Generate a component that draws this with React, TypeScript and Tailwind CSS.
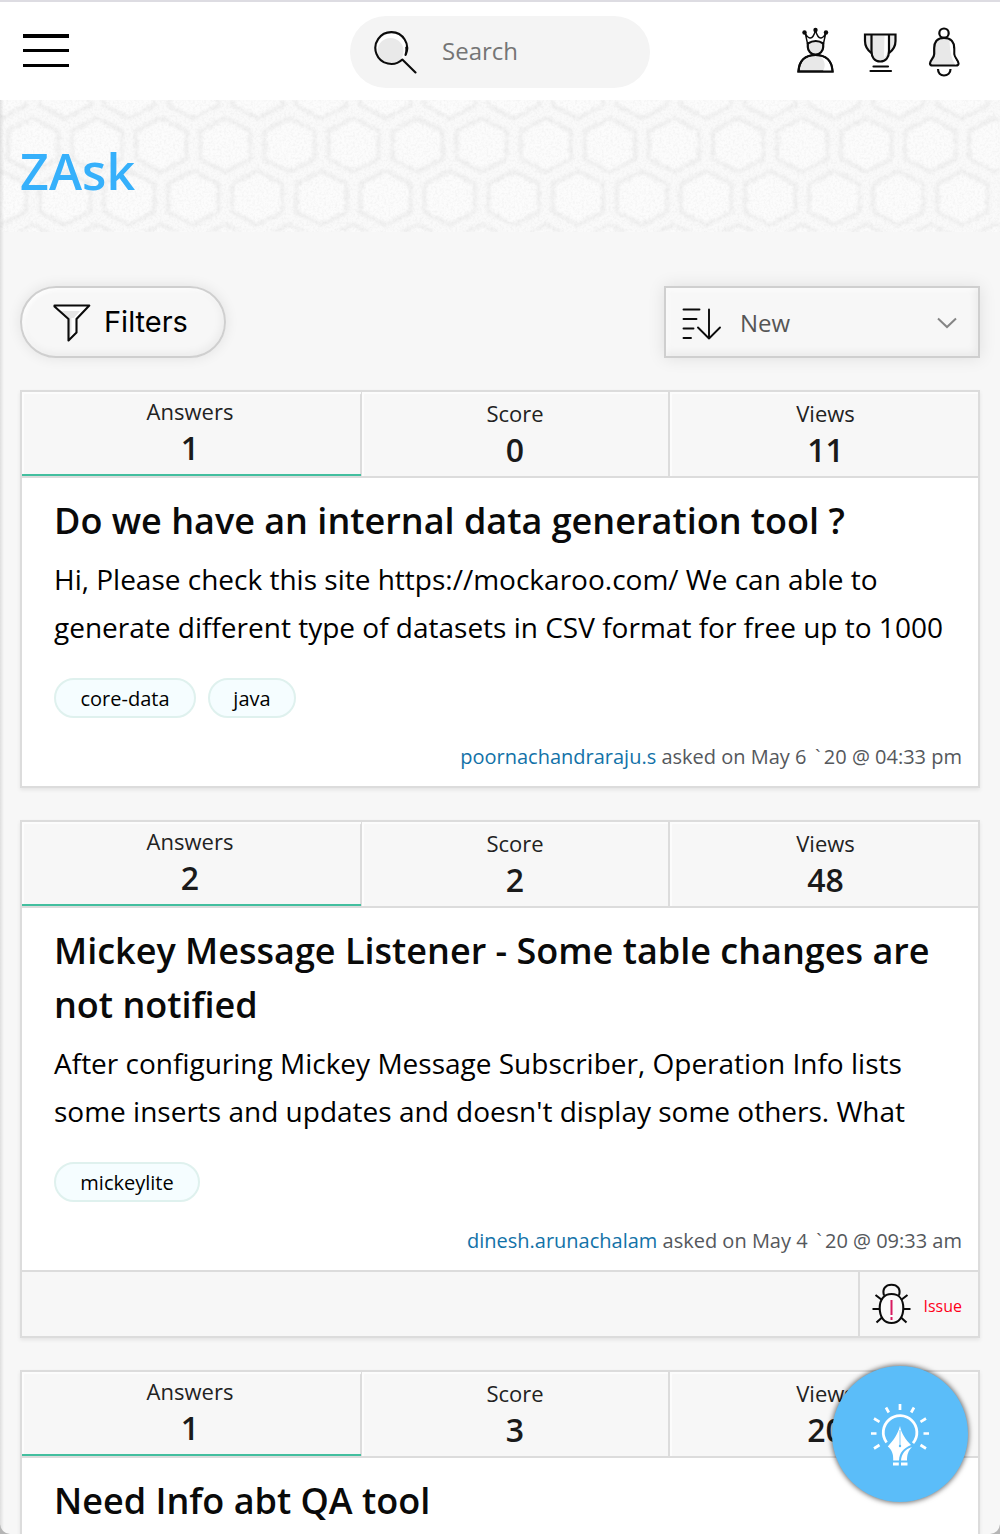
import React from "react";

type Question = {
  answers: number;
  score: number;
  views: number;
  title: string;
  body: string[];
  tags: { label: string; width: string }[];
  author: string;
  day: string;
  time: string;
  issue?: boolean;
};

const questions: Question[] = [
  {
    answers: 1,
    score: 0,
    views: 11,
    title: "Do we have an internal data generation tool ?",
    body: [
      "Hi, Please check this site https://mockaroo.com/ We can able to",
      "generate different type of datasets in CSV format for free up to 1000",
    ],
    tags: [
      { label: "core-data", width: "w-[142px]" },
      { label: "java", width: "w-[88px]" },
    ],
    author: "poornachandraraju.s",
    day: "May 6",
    time: "20 @ 04:33 pm",
  },
  {
    answers: 2,
    score: 2,
    views: 48,
    title: "Mickey Message Listener - Some table changes are not notified",
    body: [
      "After configuring Mickey Message Subscriber, Operation Info lists",
      "some inserts and updates and doesn't display some others. What",
    ],
    tags: [{ label: "mickeylite", width: "w-[146px]" }],
    author: "dinesh.arunachalam",
    day: "May 4",
    time: "20 @ 09:33 am",
    issue: true,
  },
  {
    answers: 1,
    score: 3,
    views: 20,
    title: "Need Info abt QA tool",
    body: ["", ""],
    tags: [],
    author: "",
    day: "",
    time: "",
  },
];

function HexBanner() {
  const hex = (cx: number, cy: number) =>
    `M${cx} ${cy - 27}L${cx + 25} ${cy - 14}V${cy + 14}L${cx} ${cy + 27}L${cx - 25} ${cy + 14}V${cy - 14}Z`;
  const d = [
    hex(33, 45), hex(-31, 45), hex(97, 45),
    hex(1, 98), hex(65, 98), hex(1, -8.5), hex(65, -8.5),
  ].join("");
  return (
    <svg className="absolute inset-0 h-full w-full" aria-hidden="true">
      <defs>
        <pattern id="hex" width="64.1" height="106.5" patternUnits="userSpaceOnUse">
          <path d={d} fill="#fcfcfc" stroke="#f0f0f0" strokeWidth="4" strokeLinejoin="round" />
        </pattern>
        <filter id="grain" x="0" y="0" width="100%" height="100%">
          <feTurbulence type="fractalNoise" baseFrequency="0.45" numOctaves="2" seed="4" />
          <feColorMatrix values="0 0 0 0 0.5  0 0 0 0 0.5  0 0 0 0 0.5  0.3 0 0 0 -0.12" />
        </filter>
        <filter id="soft" x="0" y="0" width="100%" height="100%">
          <feTurbulence type="fractalNoise" baseFrequency="0.3" numOctaves="2" seed="9" result="n" />
          <feDisplacementMap in="SourceGraphic" in2="n" scale="7" xChannelSelector="R" yChannelSelector="G" />
          <feGaussianBlur stdDeviation="1" />
        </filter>
      </defs>
      <rect width="100%" height="100%" fill="#fafafa" />
      <rect width="100%" height="100%" fill="url(#hex)" filter="url(#soft)" />
      <rect width="100%" height="100%" filter="url(#grain)" />
    </svg>
  );
}

function SearchIcon() {
  return (
    <svg className="h-[44px] w-[44px]" viewBox="0 0 44 44" fill="none">
      <circle cx="18" cy="18.500" r="15" fill="#fff" />
      <circle cx="16.500" cy="21" r="13" fill="#e9e9e9" />
      <path d="M31.800 24.500A15.900 15.900 0 1 0 28.300 29.500L41.500 42.500M32.300 17.500Q32.800 21 31.500 25" stroke="#0b0b0b" strokeWidth="2.100" strokeLinecap="round" strokeLinejoin="round" />
    </svg>
  );
}

function CrownUserIcon() {
  return (
    <svg className="h-[48px] w-[40px]" viewBox="0 0 40 48" fill="none" stroke="#0b0b0b" strokeWidth="2.200">
      <path d="M2.500 45.500C3 35 9 29 19.500 29S36 35 36.500 45.500Z" fill="#e8e8e8" />
      <path d="M24 30C31 32 35 37 36 45H27C30 40 29 34 24 30Z" fill="#fff" stroke="none" />
      <path d="M2.500 45.500C3 35 9 29 19.500 29S36 35 36.500 45.500Z" />
      <path d="M11.800 17.500Q20 12.500 27.200 17.500V21C27.200 25 24 28.500 19.500 28.500S11.800 25 11.800 21Z" fill="#e8e8e8" />
      <path d="M11.600 18L9 6C11 12 16.500 16.500 19.500 4C22.500 16.500 28 12 30 6L27.400 18" strokeWidth="1.400" />
      <g fill="#0b0b0b" stroke="none"><circle cx="8.500" cy="6.500" r="2.200" /><circle cx="19.500" cy="4" r="2.200" /><circle cx="30" cy="6.500" r="2.200" /></g>
    </svg>
  );
}

function TrophyIcon() {
  return (
    <svg className="h-[42px] w-[36px]" viewBox="0 0 36 42" fill="none" stroke="#0b0b0b" strokeWidth="2.200">
      <path d="M9.500 3.500H27V20C27 26 24 31 18.200 31S9.500 26 9.500 20Z" fill="#e8e8e8" stroke="none" />
      <path d="M3 3.500H9.500V22Q3 17 3 10ZM27 3.500H33.500V10Q33 18 27 22Z" fill="#e8e8e8" stroke="none" />
      <path d="M22.500 4.500H26V21L22 27Z" fill="#fff" stroke="none" />
      <path d="M9.500 22C4.500 18.500 3 14 3 10V3.500H33.500V10C33.500 14 32 18.500 27 22" />
      <path d="M9.500 3.500V20C9.500 26 12.500 30.500 18.200 30.500S27 26 27 20V3.500" />
      <path d="M11.500 35.500H26M8.500 40H29" strokeLinecap="round" />
    </svg>
  );
}

function BellIcon() {
  return (
    <svg className="h-[50px] w-[34px]" viewBox="0 0 34 50" fill="none" stroke="#0b0b0b" strokeWidth="2.200">
      <circle cx="17" cy="6.200" r="4.700" fill="#fff" />
      <path d="M17 10.800C9.500 10.800 7.200 16 7.200 21V27C7.200 31 3 33 3 36.500C3 38.500 4 38.500 5.500 38.500H29C31 38.500 31.500 38 31.500 36.500C31.500 33 27.200 31 27.200 27V21C27.200 16 24.500 10.800 17 10.800Z" fill="#e8e8e8" />
      <path d="M22.500 14Q26 16 26.200 22V28L30.500 36.500L28 37.500Q23 30 22.500 14Z" fill="#fff" stroke="none" />
      <path d="M11 42C11 46 13.500 48.500 17 48.500S23.500 46 23.500 42" />
    </svg>
  );
}

function FunnelIcon() {
  return (
    <svg className="mt-[2px] h-[40px] w-[38px]" viewBox="0 0 38 40" fill="none">
      <path d="M1.500 3H36.500L23.500 16V29L15.500 37V16Z" fill="#fff" />
      <path d="M8 8H27L20 16V27L16 36V16Z" fill="#e6e6e6" />
      <path d="M18.500 15H23V28.500L18.500 33Z" fill="#fff" />
      <path d="M1.500 2.500H36.300L23.500 16V29.500L15.500 37.500V16L1.500 3.500Z" stroke="#0b0b0b" strokeWidth="2.100" strokeLinejoin="round" />
    </svg>
  );
}

function SortIcon() {
  return (
    <svg className="mt-[3px] h-[34px] w-[40px]" viewBox="0 0 40 34" fill="none" stroke="#0b0b0b" strokeWidth="1.900" strokeLinecap="round" strokeLinejoin="round">
      <path d="M1.500 2.500H17.500M1.500 12H14.500M1.500 21.500H11.500M1.500 31H9" />
      <path d="M27 2.500V31.500M16 20.500L27 31.500L38 20.500" />
    </svg>
  );
}

function BugIcon() {
  return (
    <svg className="h-[42px] w-[40px]" viewBox="0 0 40 42" fill="none" stroke="#0b0b0b" strokeWidth="2.100">
      <path d="M12 12.500C10 6 13.500 1.800 19.500 1.800S29 6 27 12.500" />
      <path d="M19.500 11C12 11 7.700 16.500 7.700 25C7.700 34 12 40 19.500 40S31.300 34 31.300 25C31.300 16.500 27 11 19.500 11Z" fill="#fafafa" />
      <path d="M3.500 12L10 17M35.500 12L29 17M.500 26H8M31 26H38.500M4.500 39.500L10 34.500M34.500 39.500L29 34.500" />
      <path d="M19.500 17V32M19.500 34V37" stroke="#d81b60" strokeWidth="2" />
    </svg>
  );
}

function IdeaIcon() {
  return (
    <svg className="mt-[2px] h-[64px] w-[60px]" viewBox="0 0 60 64" fill="none">
      <path d="M16.600 39.500A16.800 16.800 0 1 1 43 40.200" stroke="#fff" strokeWidth="2.800" />
      <path d="M30 1V7M16 4.500L18.800 9.500M44 4.500L41.200 9.500M4 15.500L9.500 18.800M56 15.500L50.500 18.800M1 30.500H6.500M53.500 30.500H59M4 45.500L9.500 42M56 45.500L50.500 42" stroke="#fff" strokeWidth="2.700" />
      <path d="M30 23C31 30 36 37 41 42C33.500 45.500 29.500 49 29 57.500H23.200C23.500 51 22 47 17.800 43.500C23 38 28 31 30 23Z" fill="#fff" />
      <path d="M42 44C38 48 37 52 37 57.500H31C31.500 51 35 46 42 44ZM23 59.500H28.800V62.500H23ZM31 59.500H37.500V62.500H31Z" fill="#fff" />
      <path d="M30 27V42" stroke="#5abdf8" strokeWidth=".8" />
      <circle cx="30" cy="43" r="1.200" fill="#5abdf8" />
    </svg>
  );
}

function Stat({ label, value, kind = "plain" }: { label: string; value: number; kind?: "active" | "plain" | "last" }) {
  return (
    <div
      className={
        kind === "active"
          ? "relative z-10 -mr-px h-[84px] border-b-2 border-[#43bf9f] pt-px pr-[3px] text-center shadow-[inset_2px_2px_1px_#fcfcfc]"
          : kind === "last"
            ? "h-[84px] border-l-2 border-[#dcdcdc] pt-[3px] pl-[3px] text-center shadow-[inset_2px_2px_1px_#fcfcfc]"
            : "h-[84px] border-l-2 border-[#dcdcdc] pt-[3px] text-center shadow-[inset_2px_2px_1px_#fcfcfc]"
      }
    >
      <div className="h-[36px] text-[22px] leading-[36px] text-[#222]">{label}</div>
      <div className="h-[36px] text-[32px] font-semibold leading-[38px] text-[#1a1a1a]">{value}</div>
    </div>
  );
}

function QuestionCard({ q }: { q: Question }) {
  return (
    <article className="border-2 border-[#dcdcdc] bg-white shadow-[0_2px_4px_rgba(0,0,0,0.08)]">
      <div className="grid grid-cols-[338px_308px_1fr] border-b-2 border-[#dcdcdc] bg-[#f7f7f7]">
        <Stat label="Answers" value={q.answers} kind="active" />
        <Stat label="Score" value={q.score} />
        <Stat label="Views" value={q.views} kind="last" />
      </div>
      <div className="px-8 pt-4">
        <h2 className="text-[36px] font-semibold leading-[54px] text-[#0a0a0a]">{q.title}</h2>
        <div className="mt-[7px] text-[28px] leading-[48px] text-black">
          {q.body.map((line, i) => (
            <p key={i} className="h-12 whitespace-nowrap">{line}</p>
          ))}
        </div>
        <div className="mt-[27px] flex h-10 gap-3">
          {q.tags.map((t) => (
            <span key={t.label} className={`${t.width} flex h-10 items-center justify-center rounded-full border-2 border-[#dff1ee] bg-[#f5fdff] pt-[2px] text-[20px] text-black`}>
              {t.label}
            </span>
          ))}
        </div>
      </div>
      <p className="mt-[22px] h-[46px] pr-4 text-right text-[20px] leading-[34px] text-[#55585c]">
        {q.author && (
          <>
            <a className="text-[#1272a8]">{q.author}</a> asked on {q.day} <span className="mx-[3.3px]">`</span>{q.time}
          </>
        )}
      </p>
      {q.issue && (
        <div className="flex h-[66px] justify-end border-t-2 border-[#dcdcdc] bg-[#f7f7f7]">
          <div className="flex w-[120px] items-center border-l-2 border-[#dcdcdc] pl-3">
            <span className="flex"><BugIcon /></span>
            <span className="ml-[11.5px] mt-[4px] text-[16px] text-[#ff0019]">Issue</span>
          </div>
        </div>
      )}
    </article>
  );
}

export default function App() {
  return (
    <div className="relative h-[1534px] overflow-hidden bg-[#f7f7f7] font-['Open_Sans','Noto_Sans',sans-serif]">
      <header className="flex h-[100px] items-center border-t-2 border-[#dddce2] bg-white">
        <div className="w-[350px] pb-px pl-[23px]">
          <div className="flex h-[33px] w-[46px] flex-col justify-between">
            <span className="h-[3.5px] bg-black" />
            <span className="h-[3.5px] bg-black" />
            <span className="h-[3.5px] bg-black" />
          </div>
        </div>
        <div className="mt-[2px] flex h-[72px] w-[300px] items-center rounded-full bg-[#f4f4f4] pl-[24px]">
          <SearchIcon />
          <span className="-mt-[2px] ml-[24px] text-[24px] text-[#757575]">Search</span>
        </div>
        <div className="ml-[146px] flex items-center">
          <span className="-mt-[2px] flex"><CrownUserIcon /></span>
          <span className="ml-[26px] mt-[2px] flex"><TrophyIcon /></span>
          <span className="ml-[29px] mt-[2px] flex"><BellIcon /></span>
        </div>
      </header>

      <div className="relative h-[132px]">
        <HexBanner />
        <h1 className="relative pl-5 pt-[36px] text-[50px] font-semibold leading-[70px] tracking-[0.1px] text-[#36b0fb]">ZAsk</h1>
      </div>

      <main className="px-5 pt-[54px]">
        <div className="flex h-[72px] justify-between">
          <button className="flex w-[206px] items-center rounded-full border-2 border-[#cfcfcf] pl-[31px] text-black shadow-[0_0_14px_rgba(0,0,0,0.09),inset_-2px_-3px_8px_rgba(0,0,0,0.05),inset_2px_2px_4px_#fff]">
            <FunnelIcon />
            <span className="ml-[13px] font-['Inter',sans-serif] text-[29px]">Filters</span>
          </button>
          <button className="flex w-[316px] items-center border-2 border-[#cfcfcf] pl-[16px] pr-[21px] shadow-[0_0_16px_rgba(0,0,0,0.1),inset_-2px_-3px_8px_rgba(0,0,0,0.06),inset_2px_2px_4px_#fff]">
            <SortIcon />
            <span className="ml-[18px] mt-[2px] flex-1 text-left text-[24px] text-[#555]">New</span>
            <svg className="mt-px h-[12px] w-[20px]" viewBox="0 0 20 12" fill="none" stroke="#858585" strokeWidth="2"><path d="M1 1.500L10 10L19 1.500" /></svg>
          </button>
        </div>
        <div className="mt-8 flex flex-col gap-8">
          {questions.map((q) => <QuestionCard key={q.title} q={q} />)}
        </div>
      </main>

      <div className="pointer-events-none absolute bottom-0 left-0 top-[100px] w-[4px] bg-linear-to-r from-black/10 to-transparent" />
      <svg className="absolute bottom-0 left-0 h-[10px] w-[10px]" viewBox="0 0 10 10"><path d="M0 0Q1 9 10 10H0Z" fill="#b5b5b5" /></svg>
      <svg className="absolute bottom-0 right-0 h-[10px] w-[10px]" viewBox="0 0 10 10"><path d="M10 0Q9 9 0 10H10Z" fill="#b5b5b5" /></svg>
      <button className="absolute left-[832px] top-[1366px] z-20 flex h-[136px] w-[136px] items-center justify-center rounded-full bg-[#5bbdf9] shadow-[0_0_5px_1px_rgba(0,0,0,0.55)]">
        <IdeaIcon />
      </button>
    </div>
  );
}
